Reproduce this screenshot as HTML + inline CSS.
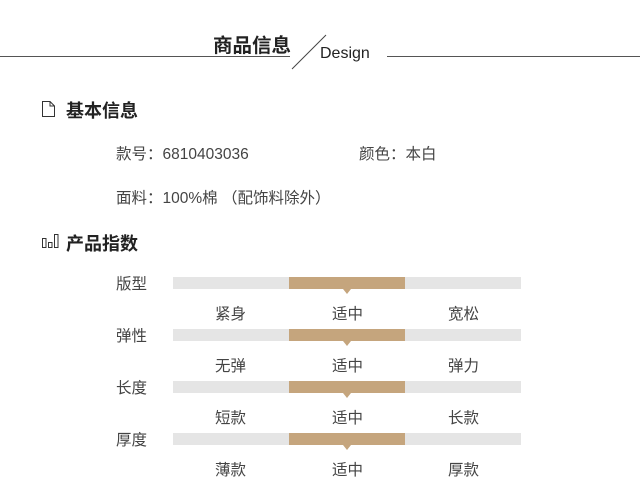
<!DOCTYPE html><html><head><meta charset="utf-8"><style>
body{margin:0;width:640px;height:477px;background:#fff;font-family:"Liberation Sans","Noto Sans CJK SC",sans-serif;color:#333;position:relative;overflow:hidden}
.a{position:absolute;white-space:nowrap}
.bar{position:absolute;left:173px;width:348px;height:12px;background:#e5e5e5}
.bar i{position:absolute;left:116px;width:116px;height:12px;background:#c5a57d}
.bar i:after{content:"";position:absolute;left:54px;top:12px;border-left:4px solid transparent;border-right:4px solid transparent;border-top:5px solid #c5a57d}
.l{font-size:15.5px;color:#444}
</style></head><body>
<div class="a" style="left:0;top:56px;width:290px;height:1px;background:#555"></div>
<div class="a" style="left:387px;top:56px;width:253px;height:1px;background:#555"></div>
<svg class="a" style="left:290px;top:33px" width="38" height="38"><line x1="2" y1="36" x2="36" y2="2" stroke="#444" stroke-width="1"/></svg>
<div class="a" style="left:213px;top:29px;font-size:19.5px;font-weight:bold;color:#222">商品信息</div>
<div class="a" style="left:320px;top:45px;font-size:16px;color:#222">Design</div>
<svg class="a" style="left:41px;top:100px" width="15" height="18"><path d="M1.5 1.5H9L13.5 6V16.5H1.5Z M9 1.5V6H13.5" fill="none" stroke="#333"/></svg>
<div class="a" style="left:66px;top:97px;font-size:18px;font-weight:bold;color:#222">基本信息</div>
<div class="a l" style="left:116px;top:142px">款号：6810403036</div>
<div class="a l" style="left:359px;top:142px">颜色：本白</div>
<div class="a l" style="left:116px;top:186px">面料：100%棉 （配饰料除外）</div>
<svg class="a" style="left:42px;top:233px" width="17" height="15"><rect x="0.5" y="5.5" width="3.5" height="9" fill="none" stroke="#333"/><rect x="6.5" y="9.5" width="3.5" height="5" fill="none" stroke="#333"/><rect x="12.5" y="1.5" width="3.5" height="13" fill="none" stroke="#333"/></svg>
<div class="a" style="left:66px;top:230px;font-size:18px;font-weight:bold;color:#222">产品指数</div>

<div class="a l" style="left:116px;top:272px">版型</div><div class="bar" style="top:277px"><i></i></div>
<div class="a l" style="left:215px;top:302px">紧身</div><div class="a l" style="left:332px;top:302px">适中</div><div class="a l" style="left:448px;top:302px">宽松</div>
<div class="a l" style="left:116px;top:324px">弹性</div><div class="bar" style="top:329px"><i></i></div>
<div class="a l" style="left:215px;top:354px">无弹</div><div class="a l" style="left:332px;top:354px">适中</div><div class="a l" style="left:448px;top:354px">弹力</div>
<div class="a l" style="left:116px;top:376px">长度</div><div class="bar" style="top:381px"><i></i></div>
<div class="a l" style="left:215px;top:406px">短款</div><div class="a l" style="left:332px;top:406px">适中</div><div class="a l" style="left:448px;top:406px">长款</div>
<div class="a l" style="left:116px;top:428px">厚度</div><div class="bar" style="top:433px"><i></i></div>
<div class="a l" style="left:215px;top:458px">薄款</div><div class="a l" style="left:332px;top:458px">适中</div><div class="a l" style="left:448px;top:458px">厚款</div>
</body></html>
